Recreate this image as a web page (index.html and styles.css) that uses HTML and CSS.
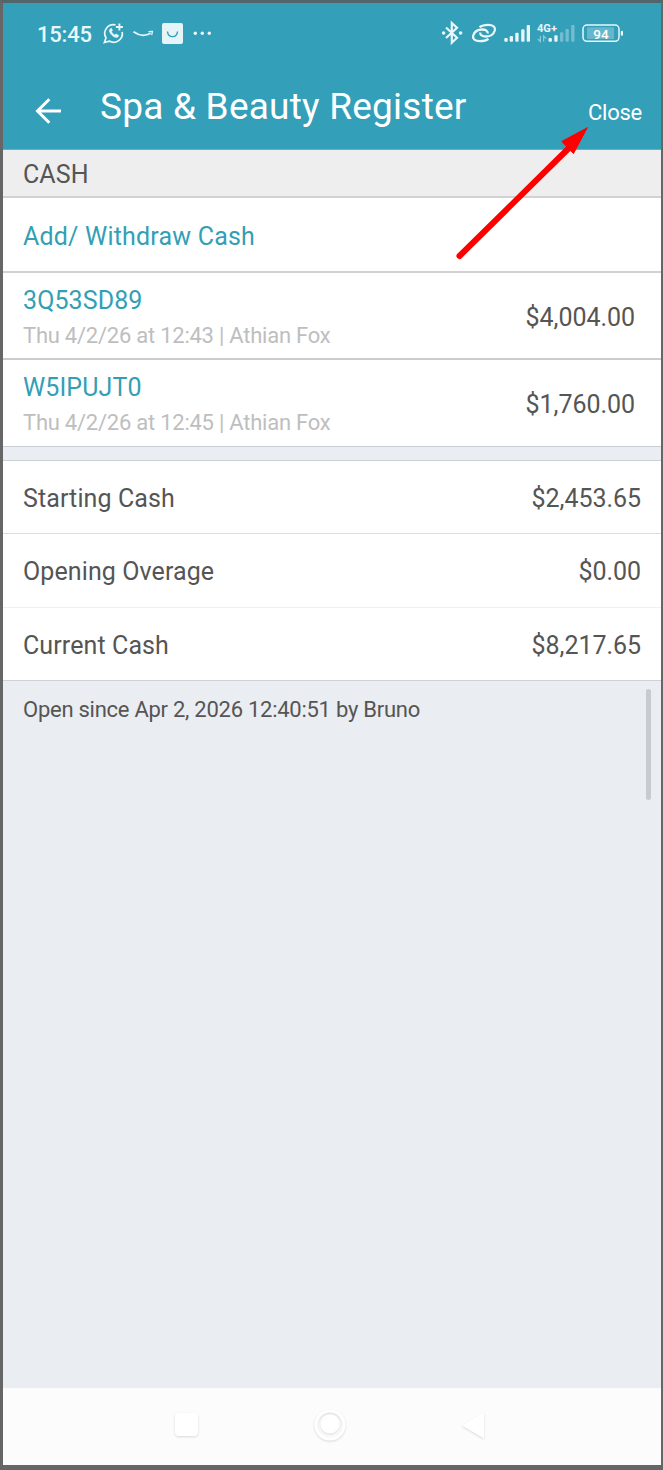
FILE: index.html
```html
<!DOCTYPE html>
<html lang="en">
<head>
<meta charset="utf-8">
<title>Spa &amp; Beauty Register</title>
<link rel="stylesheet" href="styles.css">
</head>
<body>
<div class="screen">
  <header class="header">
    <div class="status">
      <span class="clock">15:45</span>
      <svg class="status-left" width="116" height="30" viewBox="100 18 116 30" fill="none" stroke="#e9f7fa">
        <path d="M115.500 24.900a8.700 8.700 0 0 0-9.500 12.900l-1.600 4.700 4.800-1.400a8.800 8.800 0 0 0 13-9.300" stroke-width="1.700"/>
        <path d="M119.400 23.500v7M115.900 27h7" stroke-width="1.900"/>
        <path d="M109.900 29.300c-2.200 2.400 3.700 9.400 7.800 7.900l1-1.700-2.600-1.600-1.300 1.100c-1.600-.7-2.800-2-3.300-3.400l1-1.100-1.100-2.200z" fill="#e9f7fa" stroke-width=".6"/>
        <path d="M133.500 31.800c5.500 4 12 4.300 17.200 1.500" stroke-width="1.700"/>
        <path d="M148.500 31.700l4-.2-.8 3.700" stroke-width="1.200"/>
        <rect x="162" y="23" width="21" height="21" rx="2" fill="#e4f4f9" stroke="none"/>
        <path d="M167.500 31.500c.5 6.800 9.500 6.800 10 0" stroke="#339fb9" stroke-width="1.400"/>
        <g fill="#e9f7fa" stroke="none"><circle cx="195.300" cy="33.300" r="1.700"/><circle cx="202.300" cy="33.300" r="1.700"/><circle cx="209.300" cy="33.300" r="1.700"/></g>
      </svg>
      <svg class="status-right" width="190" height="30" viewBox="438 18 190 30" fill="none" stroke="#e9f7fa">
        <path d="M446 27.500l11 10.200-5.200 5V23l5.200 4.800-11 10.200" stroke-width="2.200"/>
        <circle cx="443.600" cy="33" r="1.800" fill="#e9f7fa" stroke="none"/><circle cx="460.600" cy="33" r="1.800" fill="#e9f7fa" stroke="none"/>
        <path d="M479.500 27.200C482 25.300 484.500 24.800 488 24.800C493.500 24.800 495.700 27.500 494.800 30.500C493.500 34.500 490 36.500 486 36.500C482 36.500 480 35 480.300 32.500" stroke-width="2.300"/>
        <path d="M488.500 38.800C486 40.700 483.500 41.200 480 41.200C474.500 41.200 472.300 38.500 473.200 35.500C474.500 31.500 478 29.500 482 29.500C486 29.500 488 31 487.700 33.500" stroke-width="2.300"/>
        <g fill="#e9f7fa" stroke="none">
          <rect x="504.300" y="38" width="3.400" height="3.700" rx="1"/><rect x="509.700" y="36" width="3.300" height="5.700" rx="1"/><rect x="515.300" y="32.700" width="3.300" height="9" rx="1"/><rect x="521.200" y="29.300" width="3.300" height="12.400" rx="1"/><rect x="526.700" y="25" width="3.300" height="16.700" rx="1"/>
          <rect x="548.500" y="38" width="3.400" height="3.700" rx="1"/><rect x="554.300" y="35.300" width="3.300" height="6.400" rx="1"/>
          <g opacity=".35"><rect x="560" y="32.300" width="3.300" height="9.400" rx="1"/><rect x="565.500" y="29" width="3.300" height="12.700" rx="1"/><rect x="571.200" y="25" width="3.300" height="16.700" rx="1"/></g>
        </g>
        <path d="M540.400 36v5.500l-2.500-2.500M543.600 41.500V36l2.500 2.500" stroke-width="1.200" opacity=".5"/>
        <text class="network" x="537" y="31.500" textLength="20" lengthAdjust="spacingAndGlyphs">4G+</text>
        <rect x="583" y="25" width="36" height="16.300" rx="4" stroke-width="1.500"/>
        <rect x="587" y="27.300" width="27" height="11.700" rx="1" fill="#9bd0df" fill-opacity=".5" stroke="none"/>
        <rect x="620.800" y="30.700" width="2.200" height="5" rx="1" fill="#e9f7fa" stroke="none"/>
        <text class="charge" x="593.300" y="38.500">94</text>
      </svg>
    </div>
    <div class="toolbar">
      <svg class="back" width="28" height="28" viewBox="0 0 28 28" fill="none" stroke="#fff" stroke-width="3"><path d="M27 14H3.500M15.300 2.300L3.500 14l11.800 11.700"/></svg>
      <h1 class="title">Spa &amp; Beauty Register</h1>
      <span class="close">Close</span>
    </div>
  </header>
  <main class="content">
    <h2 class="section">CASH</h2>
    <div class="row action"><span class="link add">Add/ Withdraw Cash</span></div>
    <div class="row entry first"><div><div class="link">3Q53SD89</div><div class="meta">Thu 4/2/26 at 12:43 | Athian Fox</div></div><span class="amount">$4,004.00</span></div>
    <div class="row entry last"><div><div class="link">W5IPUJT0</div><div class="meta">Thu 4/2/26 at 12:45 | Athian Fox</div></div><span class="amount">$1,760.00</span></div>
    <div class="gap"></div>
    <div class="row total"><span>Starting Cash</span><span class="amount">$2,453.65</span></div>
    <div class="row total faint"><span>Opening Overage</span><span class="amount">$0.00</span></div>
    <div class="row total end"><span>Current Cash</span><span class="amount">$8,217.65</span></div>
    <p class="note">Open since Apr 2, 2026 12:40:51 by Bruno</p>
    <div class="scrollbar"></div>
  </main>
  <nav class="nav">
    <svg width="340" height="50" viewBox="160 1400 340 50" fill="#fff">
      <g class="keys"><rect x="175" y="1413" width="23" height="23" rx="4"/><circle cx="330" cy="1425" r="14" fill="none" stroke="#fff" stroke-width="3"/><circle cx="330" cy="1424" r="9.500"/><path d="M462 1425.500l22-13v26z"/></g>
    </svg>
  </nav>
  <svg class="pointer" width="150" height="150" viewBox="445 115 150 150"><path d="M459.500 256L570 147" stroke="#fe0000" stroke-width="6" stroke-linecap="round"/><path d="M588 127l-14.500 27-4.500-4.500-7-8z" fill="#fe0000"/><path d="M588 127l-26.800 14.300 4 4.200 4 4 4.500 4.300z" fill="#fe0000"/></svg>
</div>
</body>
</html>
```
FILE: styles.css
```css
* { box-sizing: border-box; }
body { margin: 0; background: #666; font-family: Roboto, sans-serif; color: #555; }
.screen { position: relative; display: flex; flex-direction: column; width: 663px; height: 1470px; border: solid #666; border-width: 3px 2px 5px 3px; border-top-color: #526568; }
.header { height: 147px; background: #339fb9; border-bottom: 1px solid #5fb3c7; color: #fff; }
.status { display: flex; align-items: center; height: 60px; padding: 0 33px 0 34px; }
.clock { width: 63px; font-size: 22px; font-weight: 500; letter-spacing: -.2px; color: #e9f7fa; padding-top: 2px; }
.status-right { margin-left: auto; }
.network { font: bold 11px Roboto, sans-serif; fill: #e9f7fa; stroke: none; }
.charge { font: 500 13.500px Roboto, sans-serif; fill: #fff; stroke: none; }
.toolbar { display: flex; align-items: center; height: 86px; padding: 0 20px 0 31px; }
.back { margin-top: 10px; }
.title { margin: 2px 0 0 38px; font-size: 37px; font-weight: 400; line-height: 84px; letter-spacing: .23px; }
.close { margin: 13px -1px 0 auto; font-size: 22px; letter-spacing: -.25px; }
.content { position: relative; flex: 1; background: #eaedf1; font-size: 25px; line-height: 30px; letter-spacing: .1px; }
.section { height: 48px; margin: 0; padding: 10px 20px 6px; background: #eee; border-bottom: 2px solid #d2d2d2; font-size: 25px; font-weight: 400; line-height: 30px; }
.row { display: flex; align-items: center; justify-content: space-between; padding: 3px 20px 0; background: #fff; }
.link { color: #339fb5; }
.action { height: 75px; padding-top: 4px; border-bottom: 2px solid #d2d2d2; }
.add { letter-spacing: .2px; }
.amount { letter-spacing: -.05px; }
.entry { padding: 4px 26px 0 20px; border-bottom: 2px solid #ccc; }
.first { height: 87px; }
.first > div { padding-top: 2px; }
.last > div { padding-top: 1px; }
.last { height: 87px; border-bottom: 1px solid #c8ced4; }
.meta { margin-top: 5px; font-size: 22px; color: #bebebe; letter-spacing: -.24px; }
.gap { height: 14px; border-bottom: 1px solid #cbd0d4; }
.total { height: 73px; border-bottom: 1px solid #ddd; }
.faint { height: 74px; border-color: #f0f0f0; }
.end { border-color: #cfd0d8; }
.note { margin: 0; padding: 14px 20px; font-size: 22px; letter-spacing: -.26px; }
.scrollbar { position: absolute; right: 10px; top: 539px; width: 5px; height: 111px; border-radius: 3px; background: #c7cbce; }
.nav { height: 77px; padding: 12px 0 0 157px; background: #fcfcfc; }
.keys { filter: drop-shadow(0 1px 1px rgba(0,0,0,.14)); }
.pointer { position: absolute; left: 442px; top: 112px; }
```
